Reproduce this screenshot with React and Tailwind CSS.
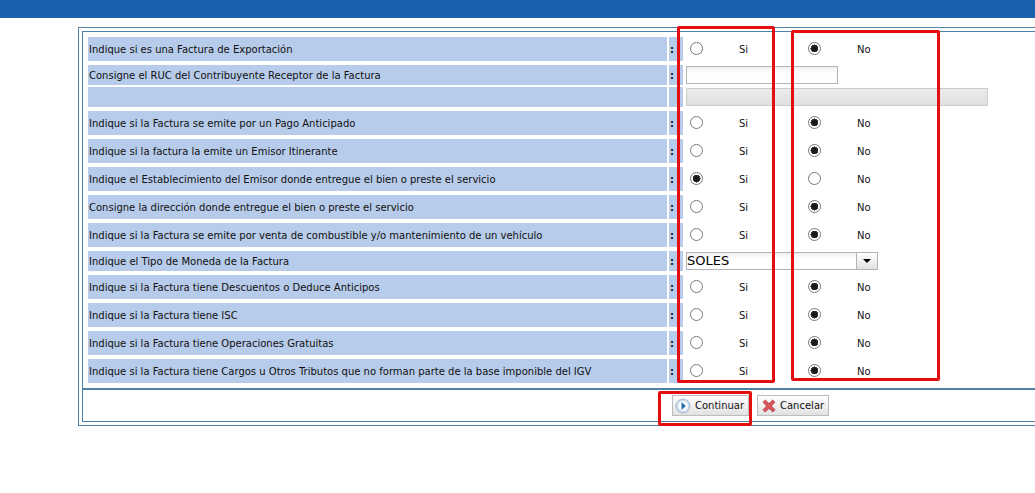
import React from 'react'

const GRID = 'grid grid-cols-[minmax(0,579px)_14px_minmax(0,1fr)] gap-x-0.5'

const Row = ({ id, label, htmlFor, tall, hideColon, children }) => {
    return (
        <div className={`${GRID} ${tall ? 'h-6' : 'h-5'}`}>
            <div className="flex items-center bg-[#b7cbea] pt-0.5 pl-px whitespace-nowrap">
                {htmlFor ? <label id={id} htmlFor={htmlFor}>{label}</label> : <span id={id}>{label}</span>}
            </div>
            <div className="flex items-center bg-[#b7cbea] pt-0.5 pl-px font-bold">{hideColon ? '' : ':'}</div>
            <div className="flex items-center pl-px">{children}</div>
        </div>
    )
}

const Option = ({ name, value, checked }) => {
    return (
        <label className="flex w-[118px] shrink-0 items-center gap-9">
            <input
                type="radio"
                name={name}
                value={value}
                defaultChecked={checked}
                className="mb-px h-[13px] w-[13px] shrink-0 appearance-none rounded-full border border-[#777777] bg-white checked:bg-[radial-gradient(circle_at_50%_50%,#111111_0px,#222222_3px,#666666_4px,#ffffff_4px)]"
            />
            <span className="pt-0.5">{value}</span>
        </label>
    )
}

const YesNoRow = ({ name, label, value = 'No' }) => {
    return (
        <Row id={`${name}-label`} label={label} tall>
            <div role="radiogroup" aria-labelledby={`${name}-label`} className="flex pl-1">
                <Option name={name} value="Si" checked={value === 'Si'} />
                <Option name={name} value="No" checked={value === 'No'} />
            </div>
        </Row>
    )
}

const Highlight = ({ className }) => (
    <div className={`pointer-events-none absolute rounded-xs border-3 border-[#e60d11] ${className}`} />
)

const ContinueIcon = () => (
    <svg width="16" height="16" viewBox="0 0 16 16" aria-hidden="true">
        <circle cx="8" cy="8" r="7" fill="#d9e5f1" stroke="#a3b6cb" />
        <circle cx="8" cy="8" r="5.5" fill="#f8fcff" stroke="#c3d8ec" />
        <path d="M6.5 4 10.8 8l-4.3 4z" fill="#2b6cab" />
    </svg>
)

const CancelIcon = () => (
    <svg width="14" height="14" viewBox="0 0 14 14" aria-hidden="true">
        <path
            d="M3.3 1 1 3.2 4.6 7 1 10.8 3.2 13 7 9.4l3.8 3.6 2.2-2.2L9.4 7 13 3.2 10.7 1 7 4.6z"
            fill="#d9555a"
            stroke="#b5383f"
            strokeWidth="0.8"
            strokeLinejoin="round"
        />
    </svg>
)

const ActionButton = ({ icon, className, children }) => (
    <button
        type="button"
        className={`flex h-[21px] items-center gap-1 border border-[#bcbcbc] bg-linear-to-b from-white to-[#e2e2e2] ${className}`}
    >
        {icon}
        {children}
    </button>
)

const App = () => {
    return (
        <div className="min-h-screen overflow-x-hidden bg-white font-['DejaVu_Sans',Verdana,sans-serif] text-[10px] leading-3 text-[#111111]">
            <header className="h-[18px] bg-[#1a62ae]" />
            <main className="mt-[9px] ml-[78px] border border-r-0 border-[#4f81a5] py-[3px] pl-[3px]">
                <form className="relative border border-r-0 border-[#4f81a5]">
                    <div className="flex flex-col gap-1 px-[5px] py-[5px]">
                        <YesNoRow name="exportacion" label="Indique si es una Factura de Exportación" />
                        <div className="flex flex-col gap-0.5">
                            <Row label="Consigne el RUC del Contribuyente Receptor de la Factura" htmlFor="ruc">
                                <input
                                    id="ruc"
                                    type="text"
                                    className="h-[18px] w-[152px] border border-[#b3b3b3] bg-linear-to-b from-[#f0f0f0] to-white to-40% px-1"
                                />
                            </Row>
                            <Row hideColon>
                                <input
                                    type="text"
                                    aria-label="Nombre del Receptor"
                                    disabled
                                    className="h-[18px] w-[302px] border border-[#cbcbcb] bg-linear-to-b from-[#ececec] to-[#e0e0e0] px-1"
                                />
                            </Row>
                        </div>
                        <YesNoRow name="anticipado" label="Indique si la Factura se emite por un Pago Anticipado" />
                        <YesNoRow name="itinerante" label="Indique si la factura la emite un Emisor Itinerante" />
                        <YesNoRow
                            name="establecimiento"
                            label="Indique el Establecimiento del Emisor donde entregue el bien o preste el servicio"
                            value="Si"
                        />
                        <YesNoRow name="direccion" label="Consigne la dirección donde entregue el bien o preste el servicio" />
                        <YesNoRow
                            name="combustible"
                            label="Indique si la Factura se emite por venta de combustible y/o mantenimiento de un vehículo"
                        />
                        <Row label="Indique el Tipo de Moneda de la Factura" htmlFor="moneda">
                            <div className="relative w-[192px]">
                                <select
                                    id="moneda"
                                    className="block h-[18px] w-full appearance-none border border-[#b3b3b3] bg-linear-to-b from-[#f0f0f0] to-white to-40% text-[13px] leading-4 text-black"
                                >
                                    <option>SOLES</option>
                                </select>
                                <span className="pointer-events-none absolute inset-y-0 right-0 flex w-[22px] items-center justify-center border border-[#b3b3b3] bg-linear-to-b from-white to-[#e2e2e2]">
                                    <svg width="8" height="4" viewBox="0 0 8 4" aria-hidden="true">
                                        <path d="M0 0h8L4 4z" fill="#000000" />
                                    </svg>
                                </span>
                            </div>
                        </Row>
                        <YesNoRow name="descuentos" label="Indique si la Factura tiene Descuentos o Deduce Anticipos" />
                        <YesNoRow name="isc" label="Indique si la Factura tiene ISC" />
                        <YesNoRow name="gratuitas" label="Indique si la Factura tiene Operaciones Gratuitas" />
                        <YesNoRow
                            name="cargos"
                            label="Indique si la Factura tiene Cargos u Otros Tributos que no forman parte de la base imponible del IGV"
                        />
                    </div>
                    <div className="flex gap-2 border-t-2 border-[#4f81a5] pt-[5px] pb-[5px] pl-[589px]">
                        <ActionButton icon={<ContinueIcon />} className="w-[77px] pl-0.5">Continuar</ActionButton>
                        <ActionButton icon={<CancelIcon />} className="w-[72px] pl-1">Cancelar</ActionButton>
                    </div>

                    <Highlight className="-top-1.5 left-[594px] h-[357px] w-[98px]" />
                    <Highlight className="-top-0.5 left-[708px] h-[351px] w-[149px]" />
                    <Highlight className="-bottom-[5px] left-[575px] h-[35px] w-[94px]" />
                </form>
            </main>
        </div>
    )
}

export default App
